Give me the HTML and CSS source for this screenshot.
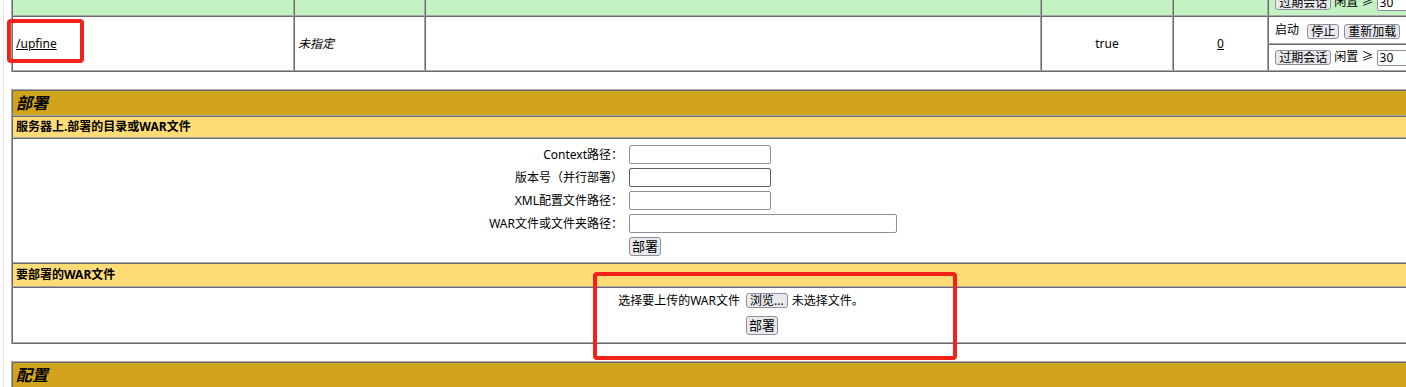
FILE: index.html
```html
<!DOCTYPE html>
<html lang="zh-CN">

<head>
  <meta charset="UTF-8">
  <title>/manager</title>
  <link rel="stylesheet" href="styles.css">
</head>

<body>
  <div class="page">

    <!-- Anwendungsliste (nur die letzten Zeilen sind sichtbar) -->
    <table class="grid apps">
      <colgroup>
        <col class="c-path">
        <col class="c-version">
        <col class="c-name">
        <col class="c-running">
        <col class="c-sessions">
        <col class="c-commands">
      </colgroup>
      <tr class="row-odd">
        <td rowspan="2">&nbsp;</td>
        <td rowspan="2">&nbsp;</td>
        <td rowspan="2">&nbsp;</td>
        <td rowspan="2" class="center">&nbsp;</td>
        <td rowspan="2" class="center">&nbsp;</td>
        <td class="cmd cmd-top">&nbsp;</td>
      </tr>
      <tr class="row-odd">
        <td class="cmd cmd-bottom">
          &nbsp;<button class="btn-sm">过期会话</button>&nbsp;闲置&nbsp;&ge;&nbsp;<input class="idle" type="text" value="30">
        </td>
      </tr>
      <tr>
        <td rowspan="2"><a href="#">/upfine</a></td>
        <td rowspan="2"><i>未指定</i></td>
        <td rowspan="2">&nbsp;</td>
        <td rowspan="2" class="center">true</td>
        <td rowspan="2" class="center"><a href="#">0</a></td>
        <td class="cmd cmd-top">
          &nbsp;启动<button class="btn-sm gap-lg">停止</button><button class="btn-sm gap">重新加载</button>
        </td>
      </tr>
      <tr>
        <td class="cmd cmd-bottom">
          &nbsp;<button class="btn-sm">过期会话</button>&nbsp;闲置&nbsp;&ge;&nbsp;<input class="idle" type="text" value="30">
        </td>
      </tr>
    </table>

    <!-- Deployment -->
    <table class="grid deploy">
      <tr>
        <td class="title">部署</td>
      </tr>
      <tr>
        <td class="header-left">服务器上.部署的目录或WAR文件</td>
      </tr>
      <tr>
        <td class="form-cell">
          <table class="form-grid">
            <tr>
              <td class="row-right">Context路径：</td>
              <td class="row-left"><input class="text-field" type="text"></td>
            </tr>
            <tr>
              <td class="row-right">版本号（并行部署）</td>
              <td class="row-left"><input class="text-field is-hover" type="text"></td>
            </tr>
            <tr>
              <td class="row-right">XML配置文件路径：</td>
              <td class="row-left"><input class="text-field" type="text"></td>
            </tr>
            <tr>
              <td class="row-right">WAR文件或文件夹路径：</td>
              <td class="row-left"><input class="text-field wide" type="text"></td>
            </tr>
            <tr>
              <td class="row-right">&nbsp;</td>
              <td class="row-left"><button class="btn">部署</button></td>
            </tr>
          </table>
        </td>
      </tr>
      <tr>
        <td class="header-left header-tall">要部署的WAR文件</td>
      </tr>
      <tr>
        <td class="upload-cell">
          <table class="upload-grid">
            <tr>
              <td class="row-right">选择要上传的WAR文件</td>
              <td class="row-left">
                <span class="file-input"><button class="btn-file" type="button">浏览...</button>未选择文件。</span>
              </td>
            </tr>
            <tr>
              <td class="row-right">&nbsp;</td>
              <td class="row-left"><button class="btn">部署</button></td>
            </tr>
          </table>
        </td>
      </tr>
    </table>

    <!-- Konfiguration -->
    <table class="grid config">
      <tr>
        <td class="title">配置</td>
      </tr>
    </table>

  </div>

  <!-- rote Markierungen aus dem Screenshot -->
  <div class="mark mark-app"></div>
  <div class="mark mark-upload"></div>
</body>

</html>
```

FILE: styles.css
```css
/* Tomcat-Manager Optik */
html,
body {
  margin: 0;
  overflow: hidden;
  background: #fff;
}

body {
  font-family: "Noto Sans", "Noto Sans CJK SC", sans-serif;
  font-size: 12px;
  line-height: 14px;
  color: #000;
}

.page {
  width: 1830px;
  min-height: 500px;
  margin-left: 3px;
  padding-left: 7px;
  border-left: 1px solid #e6e6e6;
}

a {
  color: #000;
}

/* Tabellen mit border="1"-Optik */
.grid {
  width: 100%;
  border-collapse: separate;
  border-spacing: 0;
  border: 1px solid;
  border-color: #a9a9a9 #6a6a6a #6a6a6a #a9a9a9;
  margin-bottom: 17px;
}

.grid > tbody > tr > td {
  box-sizing: border-box;
  border: 1px solid;
  border-color: #6a6a6a #a9a9a9 #a9a9a9 #6a6a6a;
  padding: 0 3px;
  vertical-align: middle;
  text-align: left;
}

/* Anwendungsliste */
.apps {
  table-layout: fixed;
  margin-top: -40px;
}

.c-path { width: 282px; }
.c-version { width: 131px; }
.c-name { width: 616px; }
.c-running { width: 132px; }
.c-sessions { width: 95px; }

.row-odd > td {
  background: #c3f3c3;
}

.grid > tbody > tr > td.center {
  text-align: center;
}

.cmd {
  white-space: nowrap;
  overflow: hidden;
}

.grid > tbody > tr > td.cmd-top {
  height: 28px;
  padding-top: 2px;
}

.grid > tbody > tr > td.cmd-bottom {
  height: 27px;
}

.btn-sm {
  box-sizing: border-box;
  height: 15px;
  font: inherit;
  font-size: 12px;
  line-height: 13px;
  padding: 0 3px;
  border: 1px solid #8f8f9d;
  border-radius: 3px;
  background: #e9e9ed;
  color: #000;
  vertical-align: middle;
}

.btn-sm.gap-lg {
  margin-left: 8px;
}

.btn-sm.gap {
  margin-left: 5px;
}

.idle {
  box-sizing: border-box;
  width: 52px;
  height: 16px;
  font: inherit;
  font-size: 12px;
  padding: 0 2px;
  border: 1px solid #8f8f9d;
  border-radius: 2px;
  vertical-align: middle;
}

/* Abschnittsköpfe */
.grid > tbody > tr > td.title {
  height: 26px;
  font-size: 16px;
  line-height: 18px;
  font-weight: bold;
  font-style: italic;
  background: #d2a41c;
}

.grid > tbody > tr > td.header-left {
  height: 22px;
  font-weight: bold;
  background: #ffdc75;
}

.grid > tbody > tr > td.header-tall {
  height: 24px;
}

/* Deploy-Formulare */
.grid > tbody > tr > td.form-cell {
  height: 125px;
  padding: 4px 3px;
}

.grid > tbody > tr > td.upload-cell {
  height: 56px;
  padding: 0 3px 4px;
}

.form-grid,
.upload-grid {
  width: 100%;
  border-collapse: collapse;
  border-spacing: 0;
}

.form-grid td,
.upload-grid td {
  box-sizing: border-box;
  padding: 0 3px;
  vertical-align: middle;
  white-space: nowrap;
}

.form-grid tr {
  height: 23px;
}

.upload-grid tr {
  height: 25px;
}

.form-grid .row-right {
  width: 610px;
  text-align: right;
}

.upload-grid .row-right {
  width: 727px;
  text-align: right;
}

.text-field {
  display: block;
  box-sizing: border-box;
  width: 142px;
  height: 19px;
  padding: 0 2px;
  font: inherit;
  border: 1px solid #8f8f9d;
  border-radius: 2px;
  background: #fff;
}

.text-field.wide {
  width: 268px;
}

.text-field.is-hover {
  border-color: #5f5f6b;
}

.btn {
  box-sizing: border-box;
  height: 19px;
  font: inherit;
  font-size: 13px;
  line-height: 15px;
  padding: 1px 2px;
  border: 1px solid #8f8f9d;
  border-radius: 3px;
  background: #e9e9ed;
  color: #000;
  vertical-align: middle;
}

.file-input {
  display: inline-flex;
  align-items: center;
  gap: 4px;
}

.btn-file {
  box-sizing: border-box;
  height: 15px;
  font: inherit;
  font-size: 12px;
  line-height: 13px;
  padding: 0 3px;
  border: 1px solid #8f8f9d;
  border-radius: 3px;
  background: #e9e9ed;
  color: #000;
}

/* Markierungsrahmen über dem Inhalt */
.mark {
  position: absolute;
  box-sizing: border-box;
  border: 4px solid #f5221b;
  border-radius: 4px;
  pointer-events: none;
}

.mark-app {
  left: 7px;
  top: 19px;
  width: 77px;
  height: 44px;
}

.mark-upload {
  left: 593px;
  top: 272px;
  width: 364px;
  height: 88px;
}
```
